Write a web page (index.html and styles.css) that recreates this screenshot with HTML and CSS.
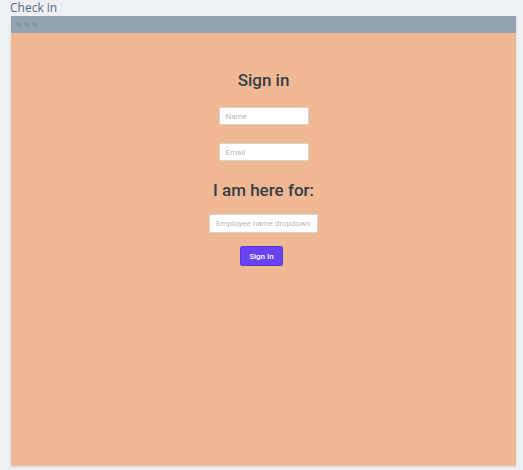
FILE: index.html
```html
<!DOCTYPE html>
<html>
<head>
<meta charset="utf-8">
<link rel="stylesheet" href="styles.css">
</head>
<body>
<div class="label">Check in</div>
<div class="frame">
  <div class="titlebar">
    <span class="dot"></span><span class="dot"></span><span class="dot"></span>
  </div>
  <div class="content">
    <h1 class="h-sign">Sign in</h1>
    <div class="field name">Name</div>
    <div class="field email">Email</div>
    <h2 class="h-here">I am here for:</h2>
    <div class="field emp">Employee name dropdown</div>
    <div class="btn">Sign In</div>
  </div>
</div>
</body>
</html>
```
FILE: styles.css
```css
html, body { margin: 0; padding: 0; }
body {
  background: #edf1f5;
  font-family: "Open Sans", "Liberation Sans", sans-serif;
  width: 523px;
  height: 470px;
  overflow: hidden;
}
.label {
  padding-left: 10px;
  height: 16px;
  line-height: 16px;
  font-size: 12px;
  color: #5a6a7b;
}
.frame {
  margin-left: 11px;
  width: 505px;
  height: 450px;
  background: #f0b994;
  box-shadow: 0 1px 2px rgba(90,100,120,0.2);
  display: flex;
  flex-direction: column;
}
.titlebar {
  height: 17px;
  background: #94a3b1;
  display: flex;
  align-items: center;
  gap: 3px;
  padding-left: 5px;
}
.dot {
  width: 5px;
  height: 5px;
  border-radius: 50%;
  background: #8494a3;
}
.content {
  display: flex;
  flex-direction: column;
  align-items: center;
  font-family: Roboto, "Liberation Sans", sans-serif;
}
.h-sign {
  margin: 36px 0 0;
  font-size: 17px;
  line-height: 22px;
  font-weight: 500;
  color: #363c47;
}
.field {
  box-sizing: border-box;
  background: #fff;
  border: 1px solid #d4d4d4;
  border-radius: 2px;
  font-family: Roboto, sans-serif;
  font-size: 8px;
  color: #b0b8c4;
  padding-left: 6px;
  display: flex;
  align-items: center;
}
.name { width: 90px; height: 18px; margin-top: 16px; }
.email { width: 90px; height: 18px; margin-top: 18px; }
.h-here {
  margin: 17px 0 0;
  font-size: 17px;
  line-height: 24px;
  font-weight: 500;
  color: #363c47;
}
.emp { width: 109px; height: 19px; margin-top: 12px; padding-left: 6px; }
.btn {
  margin-top: 13px;
  margin-right: 4px;
  width: 43px;
  height: 20px;
  box-sizing: border-box;
  background: #6744ef;
  border: 1px solid #5a3ae0;
  border-radius: 2px;
  color: #fff;
  font-size: 8px;
  font-weight: 500;
  display: flex;
  align-items: center;
  justify-content: center;
}
```
